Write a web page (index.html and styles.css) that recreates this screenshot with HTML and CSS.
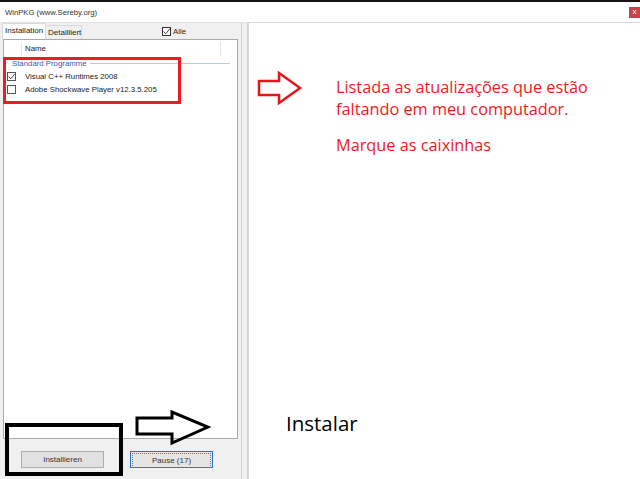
FILE: index.html
```html
<!DOCTYPE html>
<html>
<head>
<meta charset="utf-8">
<link rel="stylesheet" href="styles.css">
</head>
<body>
<div class="strip"></div>
<div class="titlebar">
  <span class="title">WinPKG (www.Sereby.org)</span>
  <span class="close">x</span>
</div>
<div class="main">
  <div class="left">
    <div class="tabrow">
      <div class="tab active">Installation</div>
      <div class="tab">Detailliert</div>
      <label class="alle"><span class="cb"><svg viewBox="0 0 9 9" width="9" height="9"><path d="M1.5 4.5 L3.8 6.8 L7.8 1.8" fill="none" stroke="#333" stroke-width="0.9"/></svg></span>Alle</label>
    </div>
    <div class="listbox">
      <div class="lhead">
        <div class="hcol1"></div>
        <div class="hcol2">Name</div>
        <div class="hcol3"></div>
      </div>
      <div class="group"><span>Standard Programme</span><i></i></div>
      <div class="item"><span class="cb"><svg viewBox="0 0 9 9" width="9" height="9"><path d="M1.5 4.5 L3.8 6.8 L7.8 1.8" fill="none" stroke="#333" stroke-width="0.9"/></svg></span><span class="itxt">Visual C++ Runtimes 2008</span></div>
      <div class="item"><span class="cb"></span><span class="itxt">Adobe Shockwave Player v12.3.5.205</span></div>
    </div>
    <div class="btnrow">
      <div class="btn">Installieren</div>
      <div class="btn focus"><span>Pause (17)</span></div>
    </div>
  </div>
  <div class="splitter"><i></i><i></i></div>
  <div class="right">
    <div class="note">
      <p>Listada as atualizações que estão<br>faltando em meu computador.</p>
      <p class="second">Marque as caixinhas</p>
    </div>
    <div class="instalar">Instalar</div>
  </div>
</div>

<div class="mark redbox"></div>
<div class="mark blackbox"></div>
<svg class="mark arrow-red" width="46" height="34" viewBox="0 0 46 34">
  <path d="M2 10 H22 V2 L43 17 L22 32 V24 H2 Z" fill="none" stroke="#e8141c" stroke-width="2.5" stroke-linejoin="miter"/>
</svg>
<svg class="mark arrow-black" width="76" height="36" viewBox="0 0 76 36">
  <path d="M2 8 H37 V2 L73 17 L37 33 V24 H2 Z" fill="none" stroke="#000" stroke-width="3" stroke-linejoin="miter"/>
</svg>
</body>
</html>
```
FILE: styles.css
```css
html, body {
  margin: 0;
  padding: 0;
}
body {
  width: 640px;
  height: 479px;
  overflow: hidden;
  position: relative;
  background: #fff;
  font-family: "Liberation Sans", Arial, sans-serif;
  font-size: 7.8px;
  color: #222;
}
.strip {
  height: 2px;
  background: #151515;
}
.titlebar {
  height: 20px;
  display: flex;
  align-items: center;
  justify-content: space-between;
  padding-left: 5px;
  background: #fff;
}
.title {
  color: #333;
  font-size: 7.7px;
}
.close {
  width: 11px;
  height: 11px;
  background: #c94448;
  color: #fff;
  font-size: 8px;
  line-height: 10px;
  text-align: center;
  margin-top: 1px;
}
.main {
  display: flex;
  height: 457px;
}
.left {
  width: 241px;
  background: #f0f0f0;
  display: flex;
  flex-direction: column;
  border-top: 1px solid #e3e3e3;
  box-sizing: border-box;
}
.tabrow {
  height: 16px;
  display: flex;
  align-items: flex-end;
  position: relative;
}
.tab {
  box-sizing: border-box;
  border: 1px solid #d9d9d9;
  border-bottom: none;
  padding: 0 2px;
  color: #222;
  white-space: nowrap;
  font-size: 8px;
}
.tab.active {
  margin-left: 2px;
  height: 16px;
  line-height: 13px;
  background: #fff;
  width: 44px;
}
.tab:not(.active) {
  height: 14px;
  line-height: 14px;
  width: 36px;
  background: #f0f0f0;
  border-left: none;
}
.alle {
  margin-left: 80px;
  align-self: center;
  display: flex;
  align-items: center;
  gap: 2px;
  margin-top: 1px;
}
.cb {
  width: 9px;
  height: 9px;
  box-sizing: border-box;
  border: 1px solid #333;
  background: #fff;
  display: inline-flex;
  align-items: center;
  justify-content: center;
  flex: none;
}
.cb svg {
  display: block;
  margin: -1px;
}
.listbox {
  margin: 0 3px;
  height: 400px;
  box-sizing: border-box;
  border: 1px solid #aaa;
  background: #fff;
}
.lhead {
  height: 16px;
  display: flex;
}
.hcol1 {
  width: 17px;
  border-right: 1px solid #e6e6e6;
  margin: 2px 0 0;
}
.hcol2 {
  width: 195px;
  padding-left: 3px;
  border-right: 1px solid #e6e6e6;
  margin-top: 2px;
  line-height: 14px;
}
.group {
  display: flex;
  align-items: center;
  padding-left: 8px;
  height: 13px;
  margin-top: 1px;
  color: #3c5aa8;
  width: 218px;
}
.group i {
  flex: 1;
  height: 1px;
  background: #b8c8ea;
  margin-left: 3px;
}
.item {
  display: flex;
  align-items: center;
  height: 13px;
  padding-left: 3px;
}
.item .cb {
  border-color: #555;
}
.itxt {
  margin-left: 9px;
  color: #222;
}
.btnrow {
  display: flex;
  padding: 12px 0 0 21px;
  gap: 26px;
}
.btn {
  box-sizing: border-box;
  width: 83px;
  height: 17px;
  background: #e1e1e1;
  border: 1px solid #adadad;
  text-align: center;
  line-height: 15px;
  color: #333;
  font-size: 8px;
}
.btn.focus {
  width: 83px;
  border-color: #2a6fc9;
  padding: 1px;
  background: #e5e5e5;
}
.btn.focus span {
  display: block;
  height: 13px;
  line-height: 13px;
  border: 1px dotted #777;
}
.splitter {
  width: 7px;
  background: #f0f0f0;
  display: flex;
  justify-content: space-between;
  border-top: 1px solid #e3e3e3;
  box-sizing: border-box;
}
.splitter i {
  width: 1px;
  background: #d2d2d2;
}
.right {
  flex: 1;
  background: #fff;
  border-left: 1px solid #d8d8d8;
  border-top: 1px solid #d8d8d8;
  display: flex;
  flex-direction: column;
  padding-left: 87px;
}
.note {
  color: #f01a1a;
  font-family: "Open Sans", "Liberation Sans", sans-serif;
  font-size: 16.3px;
  padding-top: 53px;
}
.note p {
  margin: 0;
  line-height: 22px;
}
.note .second {
  margin-top: 14px;
}
.instalar {
  margin-top: auto;
  margin-bottom: 42px;
  margin-left: -50px;
  font-family: "Open Sans", "Liberation Sans", sans-serif;
  font-size: 20.5px;
  color: #000;
}
.mark {
  position: absolute;
}
.redbox {
  left: 3px;
  top: 57px;
  width: 178px;
  height: 47px;
  box-sizing: border-box;
  border: 3px solid #ec1c24;
}
.blackbox {
  left: 5px;
  top: 423px;
  width: 118px;
  height: 53px;
  box-sizing: border-box;
  border: 4px solid #000;
}
.arrow-red {
  left: 257px;
  top: 71px;
}
.arrow-black {
  left: 135px;
  top: 410px;
}
```
